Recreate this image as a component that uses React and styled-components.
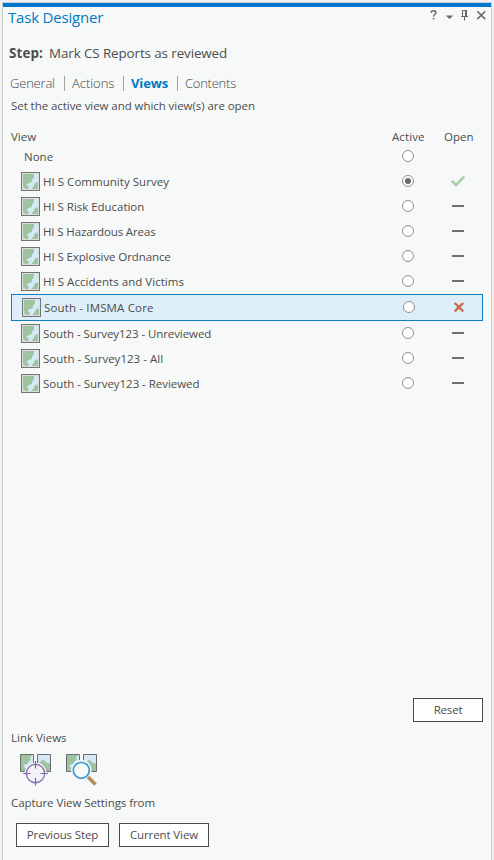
import React from "react";
import styled, { createGlobalStyle } from "styled-components";

const Global = createGlobalStyle`
  *, *::before, *::after { box-sizing: border-box; }
  body { margin: 0; background: #f1f1f1; }
  svg { display: block; flex: none; }
`;

const Page = styled.div`
  height: 860px;
  padding: 2px 2px 0;
  background: #f1f1f1;
  font-family: "Open Sans", "Noto Sans", sans-serif;
  font-size: 11.5px;
  color: #4c4c4c;
  overflow: hidden;
`;

const Panel = styled.section`
  height: 858px;
  border: 1px solid #cbcbcb;
  border-bottom: 0;
  background: #f7f9f8;
  display: flex;
  flex-direction: column;
`;

const AccentBar = styled.div`
  height: 4px;
  flex: none;
  background: #0078d0;
`;

const Text = styled.span`
  letter-spacing: ${(p) => p.$track || 0}px;
  white-space: nowrap;
`;

const TitleBar = styled.header`
  height: 22px;
  flex: none;
  display: flex;
  justify-content: space-between;
  padding-left: 5px;
`;

const Title = styled.h1`
  margin: 0;
  font-size: 15px;
  line-height: 21px;
  font-weight: 400;
  color: #0079c8;
`;

const StepLine = styled.div`
  height: 16px;
  flex: none;
  margin: 16px 0 0 6px;
  display: flex;
  gap: 6px;
  font-size: 13.4px;
  line-height: 16px;
`;

const StepLabel = styled.strong`
  width: 34px;
  font-weight: 700;
`;

const Tabs = styled.nav`
  height: 18px;
  flex: none;
  margin: 13px 0 0 7px;
  display: flex;
  align-items: center;
`;

const Tab = styled.span`
  width: ${(p) => p.$width}px;
  font-size: 13px;
  line-height: 18px;
  font-weight: ${(p) => (p.$active ? 700 : 300)};
  color: ${(p) => (p.$active ? "#0079c8" : "#444")};
`;

const Divider = styled.i`
  width: 1px;
  height: 15px;
  margin-right: 7px;
  background: #a3a3a3;
`;

const Hint = styled.p`
  height: 16px;
  flex: none;
  margin: 6px 0 0 8px;
  line-height: 16px;
`;

const List = styled.div`
  margin: 15px 8px 0;
  flex: none;
`;

const ListHead = styled.div`
  height: 15px;
  display: grid;
  grid-template-columns: 381px 52px 1fr;
  line-height: 15px;
`;

const Row = styled.div`
  height: ${(p) => (p.$selected ? 27 : 25)}px;
  border: ${(p) => (p.$selected ? "1px solid #0d7cc0" : "0")};
  background: ${(p) => (p.$selected ? "#deeef9" : "transparent")};
  display: grid;
  grid-template-columns: 391px 48px 1fr;
  align-items: center;
`;

const NameCell = styled.div`
  display: flex;
  align-items: center;
  gap: 3px;
  padding-left: ${(p) => (p.$plain ? 13 : 10)}px;
  line-height: 17px;
`;

const Radio = styled.span`
  width: 12px;
  height: 12px;
  margin-bottom: 1px;
  border: 1px solid #909395;
  border-radius: 50%;
  background: #fff;
  display: grid;
  place-items: center;

  &::after {
    content: "";
    width: 6px;
    height: 6px;
    border-radius: 50%;
    background: ${(p) => (p.$checked ? "#6a6a6a" : "transparent")};
  }
`;

const StateCell = styled.div`
  width: 16px;
  height: 14px;
  margin-bottom: 1px;
`;

const Footer = styled.footer`
  margin-top: auto;
  height: 162px;
  flex: none;
  padding-left: 8px;
  line-height: 16px;
`;

const Button = styled.button`
  width: ${(p) => p.$width}px;
  height: 24px;
  padding: 0 0 1px;
  border: 1px solid #4a4a4a;
  background: #fff;
  color: #4c4c4c;
  font: inherit;
  line-height: 20px;
`;

const ResetLine = styled.div`
  display: flex;
  justify-content: flex-end;
  padding-right: 8px;
  height: 32px;
`;

const LinkIcons = styled.div`
  display: flex;
  gap: 14px;
  padding: 8px 0 0 9px;
  height: 49px;
`;

const Actions = styled.div`
  display: flex;
  gap: 10px;
  padding: 12px 0 0 5px;
`;

function WindowControls() {
  return (
    <svg width="62" height="22" viewBox="0 0 62 22" fill="none" stroke="#666" strokeWidth="1.5">
      <path d="M2.3 5.8V4.5Q3.2 3.7 4.8 3.7Q6.9 3.7 6.9 5.5Q6.9 6.7 5.7 7.5Q4.6 8.2 4.6 9.6" />
      <path d="M4.6 10.9V12.4" />
      <path d="M16.8 8.5H24.2L20.5 12Z" fill="#666" stroke="none" />
      <path d="M33.5 3.5H38M33.5 3.5V9.5M32 9.5H39M35.5 9.5V13.5" strokeWidth="1.1" />
      <path d="M37 3V9.5" strokeWidth="2" />
      <path d="M48.3 4.3L56.2 12.1M56.2 4.3L48.3 12.1" />
    </svg>
  );
}

function MapIcon() {
  return (
    <svg width="19" height="19" viewBox="0 0 19 19">
      <rect x=".5" y=".5" width="18" height="18" fill="#dedfdb" stroke="#727477" />
      <rect x="2" y="2" width="15" height="15" fill="#9dc49e" />
      <path d="M13 2H17V11L15.5 10.6L13.5 12L12.8 14.2L10.5 17H7.3L7.7 14.5L5.5 13L7 11.6L10.6 10L11 7.4L12.8 5.5Z" fill="#d3e9f8" />
      <path d="M2 14.5L4.5 17H2Z" fill="#c7dcc8" />
    </svg>
  );
}

function StateIcon({ state }) {
  return (
    <svg width="16" height="14" viewBox="0 0 16 14">
      {state === "open" && <path d="M1.7 6.8L6 11L14.3 2.5" fill="none" stroke="#a9d0aa" strokeWidth="2.7" />}
      {state === "closed" && <path d="M2 7H14" stroke="#707073" strokeWidth="2" />}
      {state === "remove" && <path d="M3.7 3L12.2 11.4M12.2 3L3.7 11.4" stroke="#c96b4b" strokeWidth="2.4" />}
    </svg>
  );
}

function MapPair() {
  return (
    <>
      <path d="M.5 .5H13.5V17.5H.5Z" fill="#9dc49e" />
      <path d="M13 1V12L6.5 14L3.5 13L4 10.8L7.5 10L9 7L11 6L10 4L12 1Z" fill="#d3e9f8" />
      <path d="M17.5 .5H30.5V17.5H17.5Z" fill="#d3e9f8" />
      <path d="M18 9L20 8L23 5.8L25 7L27 9L30 9.5V17H18Z" fill="#9dc49e" />
      <path d="M13.5 .5H.5V17.5H13.5ZM17.5 .5H30.5V17.5H17.5Z" fill="none" stroke="#696b6e" />
      <path d="M15.5 0V18" stroke="#f7f9f8" strokeWidth="2" />
    </>
  );
}

function LinkCenterIcon() {
  return (
    <svg width="32" height="32" viewBox="0 0 32 32">
      <MapPair />
      <circle cx="15.5" cy="19.5" r="11" fill="#f7f9f8" />
      <circle cx="15.5" cy="19.5" r="9.2" fill="#f5f3f8" stroke="#8b75b4" strokeWidth="1.4" />
      <path d="M15.5 7V14.5M15.5 24V31.5M3 19.5H10.5M20.5 19.5H28" stroke="#7a67a7" strokeWidth="1.2" />
    </svg>
  );
}

function LinkZoomIcon() {
  return (
    <svg width="32" height="32" viewBox="0 0 32 32">
      <MapPair />
      <circle cx="15.3" cy="16" r="10.3" fill="#f7f9f8" />
      <path d="M21 22L30 31" stroke="#f7f9f8" strokeWidth="5" />
      <path d="M22 23L29.5 30.5" stroke="#b98c5b" strokeWidth="3.6" />
      <circle cx="15.3" cy="16.3" r="8" fill="#f7f9f8" stroke="#459bd5" strokeWidth="1.8" />
    </svg>
  );
}

const views = [
  { name: "None", plain: true, track: 0 },
  { name: "HI S Community Survey", state: "open", active: true, track: 0.03 },
  { name: "HI S Risk Education", state: "closed", track: -0.03 },
  { name: "HI S Hazardous Areas", state: "closed", track: -0.13 },
  { name: "HI S Explosive Ordnance", state: "closed", track: -0.1 },
  { name: "HI S Accidents and Victims", state: "closed", track: 0.03 },
  { name: "South - IMSMA Core", state: "remove", selected: true, track: 0.15 },
  { name: "South - Survey123 - Unreviewed", state: "closed", track: -0.08 },
  { name: "South - Survey123 - All", state: "closed", track: 0.02 },
  { name: "South - Survey123 - Reviewed", state: "closed", track: -0.04 },
];

export default function App() {
  return (
    <Page>
      <Global />
      <Panel>
        <AccentBar />
        <TitleBar>
          <Title><Text $track={-0.2}>Task Designer</Text></Title>
          <WindowControls />
        </TitleBar>
        <StepLine>
          <StepLabel><Text $track={0.1}>Step:</Text></StepLabel>
          <Text $track={-0.1}>Mark CS Reports as reviewed</Text>
        </StepLine>
        <Tabs>
          <Tab $width={54}><Text $track={-0.2}>General</Text></Tab>
          <Divider />
          <Tab $width={51}><Text $track={-0.05}>Actions</Text></Tab>
          <Divider />
          <Tab $width={46} $active><Text $track={-0.1}>Views</Text></Tab>
          <Divider />
          <Tab $width={60}><Text $track={-0.25}>Contents</Text></Tab>
        </Tabs>
        <Hint><Text $track={-0.06}>Set the active view and which view(s) are open</Text></Hint>
        <List>
          <ListHead>
            <Text>View</Text>
            <Text $track={0.1}>Active</Text>
            <Text>Open</Text>
          </ListHead>
          {views.map((v) => (
            <Row key={v.name} $selected={v.selected}>
              <NameCell $plain={v.plain}>
                {!v.plain && <MapIcon />}
                <Text $track={v.track}>{v.name}</Text>
              </NameCell>
              <Radio $checked={v.active} />
              <StateCell>{v.state && <StateIcon state={v.state} />}</StateCell>
            </Row>
          ))}
        </List>
        <Footer>
          <ResetLine><Button $width={70}><Text $track={-0.2}>Reset</Text></Button></ResetLine>
          <div><Text>Link Views</Text></div>
          <LinkIcons>
            <LinkCenterIcon />
            <LinkZoomIcon />
          </LinkIcons>
          <div><Text $track={-0.07}>Capture View Settings from</Text></div>
          <Actions>
            <Button $width={93}><Text $track={-0.13}>Previous Step</Text></Button>
            <Button $width={90}><Text $track={-0.1}>Current View</Text></Button>
          </Actions>
        </Footer>
      </Panel>
    </Page>
  );
}
